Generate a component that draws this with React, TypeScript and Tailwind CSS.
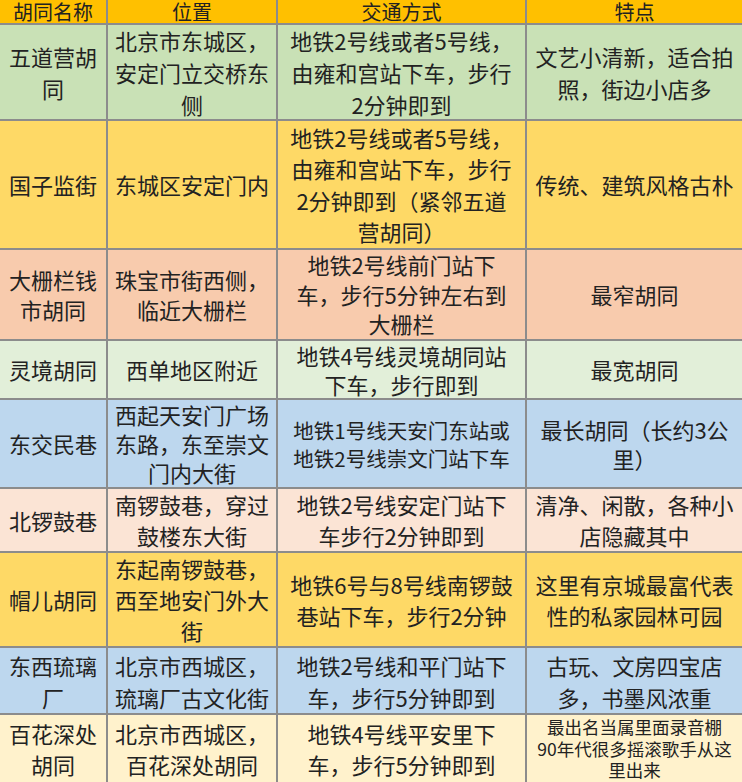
import React from "react";

type Cell = { lines: string[]; cls?: string };
type Row = { bg: string; h: string; lead: string; cells: Cell[] };

const rows: Row[] = [
  {
    bg: "bg-[#c9e1b6]",
    h: "h-[94px]",
    lead: "leading-[32px]",
    cells: [
      { lines: ["五道营胡", "同"] },
      { lines: ["北京市东城区，", "安定门立交桥东", "侧"] },
      { lines: ["地铁2号线或者5号线，", "由雍和宫站下车，步行", "2分钟即到"] },
      { lines: ["文艺小清新，适合拍", "照，街边小店多"] },
    ],
  },
  {
    bg: "bg-[#fed966]",
    h: "h-[127px]",
    lead: "leading-[31.5px]",
    cells: [
      { lines: ["国子监街"] },
      { lines: ["东城区安定门内"] },
      { lines: ["地铁2号线或者5号线，", "由雍和宫站下车，步行", "2分钟即到（紧邻五道", "营胡同）"] },
      { lines: ["传统、建筑风格古朴"] },
    ],
  },
  {
    bg: "bg-[#f8cbad]",
    h: "h-[89px]",
    lead: "leading-[29.5px]",
    cells: [
      { lines: ["大栅栏钱", "市胡同"] },
      { lines: ["珠宝市街西侧，", "临近大栅栏"] },
      { lines: ["地铁2号线前门站下", "车，步行5分钟左右到", "大栅栏"] },
      { lines: ["最窄胡同"] },
    ],
  },
  {
    bg: "bg-[#e2efd9]",
    h: "h-[57px]",
    lead: "leading-[28.5px]",
    cells: [
      { lines: ["灵境胡同"] },
      { lines: ["西单地区附近"] },
      { lines: ["地铁4号线灵境胡同站", "下车，步行即到"] },
      { lines: ["最宽胡同"] },
    ],
  },
  {
    bg: "bg-[#bdd7ee]",
    h: "h-[87px]",
    lead: "leading-[29px]",
    cells: [
      { lines: ["东交民巷"] },
      { lines: ["西起天安门广场", "东路，东至崇文", "门内大街"] },
      { lines: ["地铁1号线天安门东站或", "地铁2号线崇文门站下车"], cls: "text-[20.5px] leading-[28px]" },
      { lines: ["最长胡同（长约3公", "里）"] },
    ],
  },
  {
    bg: "bg-[#fbe4d5]",
    h: "h-[62px]",
    lead: "leading-[31px]",
    cells: [
      { lines: ["北锣鼓巷"] },
      { lines: ["南锣鼓巷，穿过", "鼓楼东大街"] },
      { lines: ["地铁2号线安定门站下", "车步行2分钟即到"] },
      { lines: ["清净、闲散，各种小", "店隐藏其中"] },
    ],
  },
  {
    bg: "bg-[#fed966]",
    h: "h-[93px]",
    lead: "leading-[31px]",
    cells: [
      { lines: ["帽儿胡同"] },
      { lines: ["东起南锣鼓巷，", "西至地安门外大", "街"] },
      { lines: ["地铁6号与8号线南锣鼓", "巷站下车，步行2分钟"] },
      { lines: ["这里有京城最富代表", "性的私家园林可园"] },
    ],
  },
  {
    bg: "bg-[#bdd7ee]",
    h: "h-[65px]",
    lead: "leading-[32px]",
    cells: [
      { lines: ["东西琉璃", "厂"] },
      { lines: ["北京市西城区，", "琉璃厂古文化街"] },
      { lines: ["地铁2号线和平门站下", "车，步行5分钟即到"] },
      { lines: ["古玩、文房四宝店", "多，书墨风浓重"] },
    ],
  },
  {
    bg: "bg-[#fff2cc]",
    h: "h-[67px]",
    lead: "leading-[31px]",
    cells: [
      { lines: ["百花深处", "胡同"] },
      { lines: ["北京市西城区，", "百花深处胡同"] },
      { lines: ["地铁4号线平安里下", "车，步行5分钟即到"] },
      { lines: ["最出名当属里面录音棚", "90年代很多摇滚歌手从这", "里出来"], cls: "text-[17.5px] leading-[21.5px]" },
    ],
  },
];

const headers = ["胡同名称", "位置", "交通方式", "特点"];

export default function App() {
  return (
    <div
      className="w-[742px] h-[782px] bg-[#8c8c8c] text-[#222222] overflow-hidden"
      style={{ fontFamily: '"Noto Sans CJK SC", "Noto Sans", sans-serif' }}
    >
      <div className="grid grid-cols-[106px_168px_247px_215px] gap-[2px]">
        {headers.map((h) => (
          <div
            key={h}
            className="h-[23px] bg-[#ffc000] flex items-center justify-center text-[20px] leading-[23px]"
          >
            {h}
          </div>
        ))}
        {rows.map((r, ri) =>
          r.cells.map((c, ci) => (
            <div
              key={`${ri}-${ci}`}
              className={`${r.h} ${r.bg} flex flex-col items-center justify-center text-center ${
                c.cls ?? `text-[22px] ${r.lead}`
              } whitespace-nowrap`}
            >
              {c.lines.map((l, li) => (
                <span key={li} className="block">
                  {l}
                </span>
              ))}
            </div>
          ))
        )}
      </div>
    </div>
  );
}
